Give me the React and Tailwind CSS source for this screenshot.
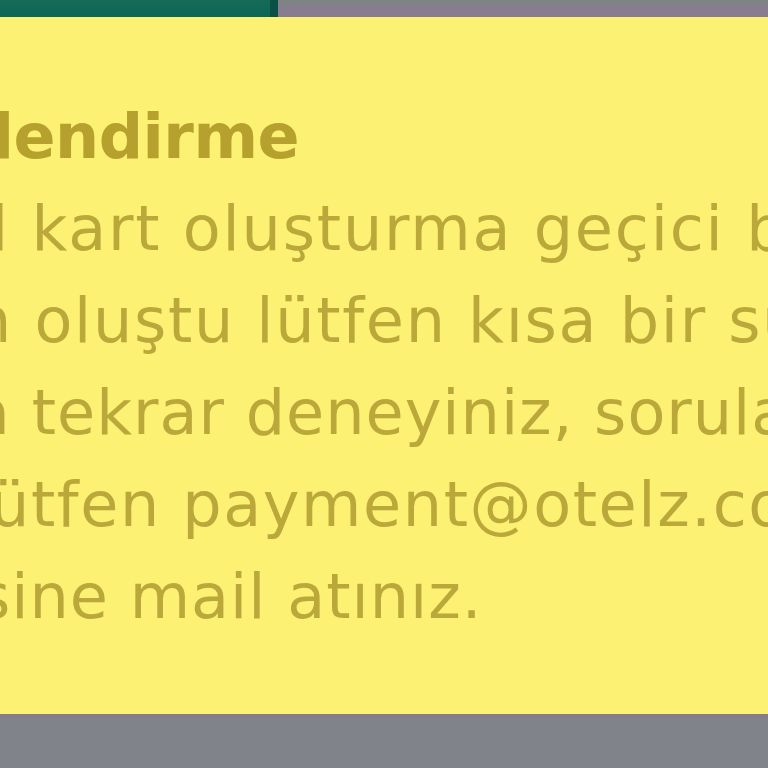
import React from 'react';

const lines = [
  { text: 'l kart oluşturma geçici bir sorun', cls: '-ml-[9px] tracking-[1.8px]' },
  { text: 'n oluştu lütfen kısa bir süre sonra', cls: '-ml-[28px] tracking-[1.7px]' },
  { text: 'a tekrar deneyiniz, sorularınız için', cls: '-ml-[28px] tracking-[1px]' },
  { text: 'ütfen payment@otelz.com adresine', cls: '-ml-[10px] tracking-[1.6px]' },
  { text: 'sine mail atınız.', cls: '-ml-[22px] tracking-[1px]' },
];

const App = () => {
  return (
    <div className="w-[768px] h-[768px] overflow-hidden bg-[#fdf173] flex flex-col">
      {/* ust sekme cubugu */}
      <div className="h-[17px] flex shrink-0">
        <div className="w-[278px] bg-gradient-to-b from-[#166b57] to-[#0c6558] border-r-[8px] border-[#0b4f46]" />
        <div className="flex-1 bg-gradient-to-b from-[#7b857f] via-[#867c8f] to-[#877b90]" />
      </div>

      {/* uyari kutusu */}
      <div
        className="flex-1 overflow-hidden pt-[74px] text-[#bba83a]"
        style={{ fontFamily: '"DejaVu Sans", "Liberation Sans", sans-serif' }}
      >
        <div className="text-[62px] leading-[92px] font-bold text-[#b6a12e] whitespace-nowrap -ml-[28px] tracking-[-0.5px]">
          ilendirme
        </div>
        {lines.map((line, i) => (
          <div key={i} className={`text-[62px] leading-[92px] whitespace-nowrap ${line.cls}`}>
            {line.text}
          </div>
        ))}
      </div>

      {/* alt alan */}
      <div className="h-[54px] shrink-0 bg-[#80848a] border-t-[4px] border-[#857a8e]" />
    </div>
  );
};

export default App;
